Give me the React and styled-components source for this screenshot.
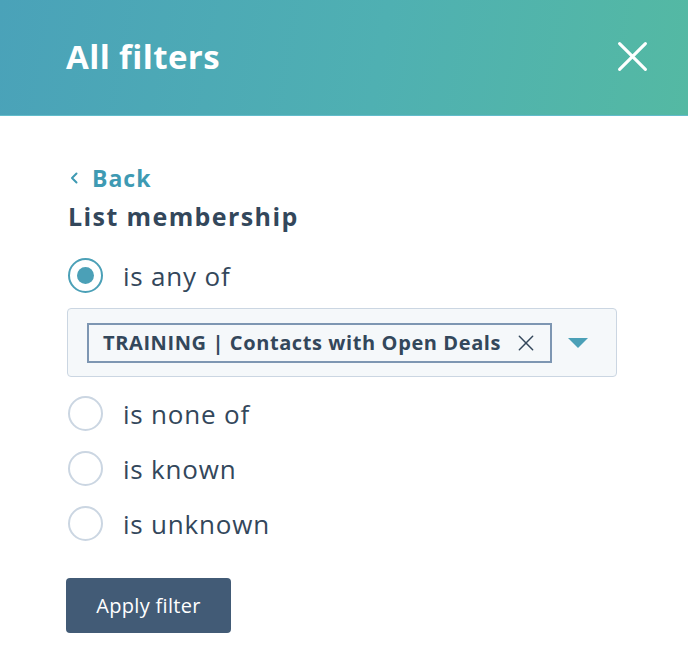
import React from "react";
import styled, { createGlobalStyle } from "styled-components";

const Global = createGlobalStyle`
  html, body { margin: 0; padding: 0; background: #fff; }
  body { font-family: "Open Sans", "Noto Sans", sans-serif; color: #33475b; }
  * { box-sizing: border-box; }
`;

const Page = styled.div`
  width: 688px;
  height: 670px;
  background: #fff;
  overflow: hidden;
`;

const Header = styled.header`
  height: 116px;
  display: flex;
  align-items: center;
  justify-content: space-between;
  padding: 0 40px 2px 66px;
  background: linear-gradient(100deg, #4aa2b9 0%, #4fb0b2 55%, #54b9a3 100%);
  border-bottom: 1px solid #62bccb;
`;

const Title = styled.h1`
  margin: 0;
  font-size: 33px;
  font-weight: 700;
  color: #fff;
  letter-spacing: 0.4px;
`;

const CloseButton = styled.button`
  border: 0;
  background: none;
  padding: 0;
  width: 32px;
  height: 32px;
  display: flex;
  align-items: center;
  justify-content: center;
  cursor: pointer;
`;

const Body = styled.div`
  padding: 47px 0 0 68px;
  display: flex;
  flex-direction: column;
`;

const BackLink = styled.a`
  display: flex;
  align-items: center;
  gap: 14px;
  color: #3e9ab3;
  font-size: 23px;
  font-weight: 700;
  letter-spacing: 1px;
  text-decoration: none;
  margin-left: 2px;
  height: 30px;
`;

const Heading = styled.h2`
  margin: 6px 0 0;
  font-size: 25px;
  font-weight: 700;
  letter-spacing: 1.4px;
  color: #33475b;
  height: 34px;
  line-height: 34px;
`;

const Options = styled.div`
  display: flex;
  flex-direction: column;
  margin-top: 15px;
`;

const OptionRow = styled.label`
  display: flex;
  align-items: center;
  gap: 20px;
  height: 55px;
  font-size: 26px;
  letter-spacing: 0.8px;
  color: #33475b;
  cursor: pointer;
`;

const RadioCircle = styled.span`
  width: 35px;
  height: 35px;
  border-radius: 50%;
  border: 2px solid ${(p) => (p.$checked ? "#4ba0b7" : "#cbd6e2")};
  background: #fff;
  display: flex;
  align-items: center;
  justify-content: center;
  flex: none;
  &::after {
    content: "";
    width: 17px;
    height: 17px;
    border-radius: 50%;
    background: #4ba0b7;
    display: ${(p) => (p.$checked ? "block" : "none")};
  }
`;

const SelectBox = styled.div`
  width: 550px;
  height: 69px;
  margin: 5px 0 9px -1px;
  background: #f5f8fa;
  border: 1px solid #cbd6e2;
  border-radius: 4px;
  display: flex;
  align-items: center;
  padding: 0 28px 0 19px;
  gap: 16px;
`;

const Tag = styled.div`
  height: 40px;
  width: 465px;
  border: 2px solid #7d96b2;
  background: #f5f8fa;
  display: flex;
  align-items: center;
  justify-content: space-between;
  padding: 0 16px 0 14px;
  font-size: 20px;
  font-weight: 700;
  letter-spacing: 0.6px;
  color: #33475b;
  white-space: nowrap;
`;

const Caret = styled.span`
  width: 0;
  height: 0;
  border-left: 10px solid transparent;
  border-right: 10px solid transparent;
  border-top: 10px solid #4ba0b7;
  margin-left: auto;
`;

const ApplyButton = styled.button`
  margin: 27px 0 0 -2px;
  width: 165px;
  height: 55px;
  border: 0;
  border-radius: 4px;
  background: #425b76;
  color: #fff;
  font-family: inherit;
  font-size: 20px;
  letter-spacing: 0.3px;
  cursor: pointer;
`;

const XIcon = ({ size, stroke, color }) => (
  <svg width={size} height={size} viewBox="0 0 24 24" fill="none">
    <path d="M2 2 L22 22 M22 2 L2 22" stroke={color} strokeWidth={stroke} strokeLinecap="round" />
  </svg>
);

const options = [
  { label: "is any of", checked: true },
  { label: "is none of" },
  { label: "is known" },
  { label: "is unknown" },
];

export default function App() {
  return (
    <Page>
      <Global />
      <Header>
        <Title>All filters</Title>
        <CloseButton aria-label="Close">
          <XIcon size={31} stroke={2.4} color="#fff" />
        </CloseButton>
      </Header>
      <Body>
        <BackLink href="#">
          <svg width="8" height="12" viewBox="0 0 8 12" fill="none">
            <path d="M6.5 1.5 L2 6 L6.5 10.5" stroke="#3e9ab3" strokeWidth="2" strokeLinecap="round" strokeLinejoin="round" />
          </svg>
          Back
        </BackLink>
        <Heading>List membership</Heading>
        <Options>
          {options.map((o, i) => (
            <React.Fragment key={o.label}>
              <OptionRow>
                <RadioCircle $checked={o.checked} />
                {o.label}
              </OptionRow>
              {i === 0 && (
                <SelectBox>
                  <Tag>
                    TRAINING | Contacts with Open Deals
                    <XIcon size={16} stroke={2.2} color="#33475b" />
                  </Tag>
                  <Caret />
                </SelectBox>
              )}
            </React.Fragment>
          ))}
        </Options>
        <ApplyButton>Apply filter</ApplyButton>
      </Body>
    </Page>
  );
}
